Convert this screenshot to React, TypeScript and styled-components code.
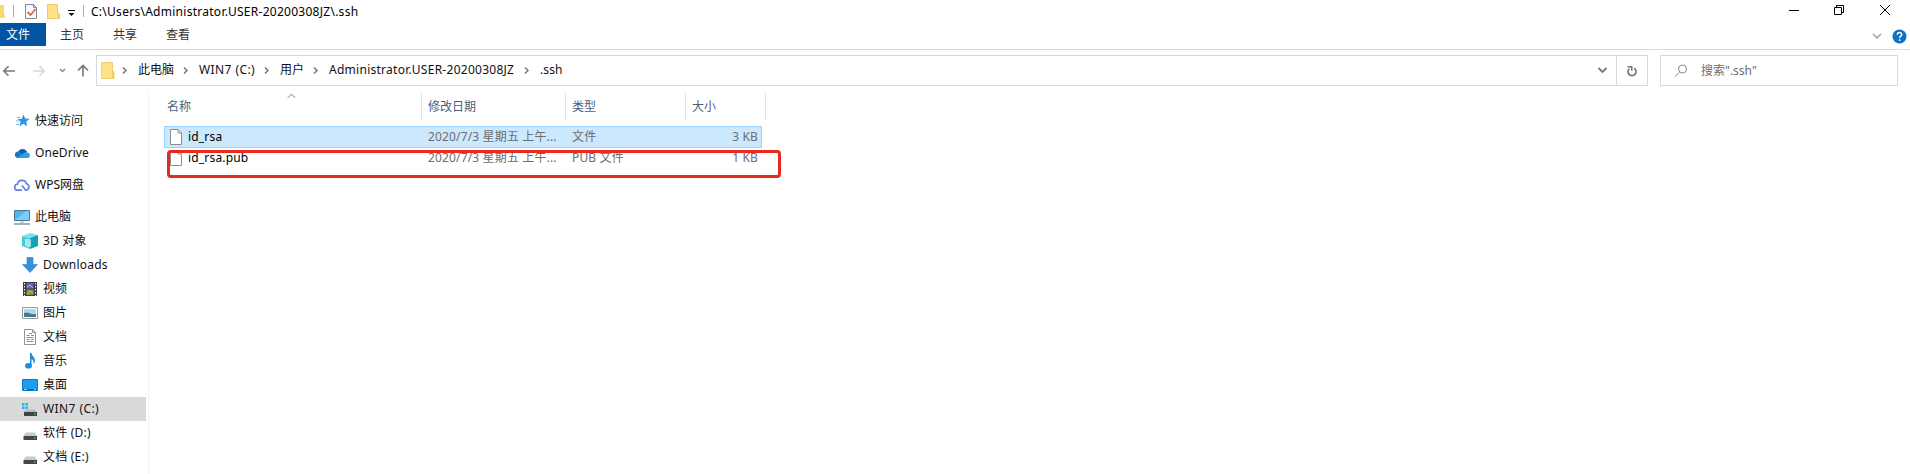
import React from 'react';
import styled, { createGlobalStyle } from 'styled-components';

const Global = createGlobalStyle`
  * { box-sizing: border-box; }
  body { margin: 0; background: #fff; overflow: hidden; }
`;

const Window = styled.div`
  width: 1910px;
  height: 474px;
  display: flex;
  flex-direction: column;
  background: #fff;
  overflow: hidden;
  color: #111;
  font: 12px/16px 'Noto Sans', 'Noto Sans CJK SC', sans-serif;
  white-space: pre;
  svg { display: block; flex: none; }
`;

const Label = styled.span<{ $ls?: number }>`
  letter-spacing: ${p => p.$ls ?? 0}px;
`;

const TitleBar = styled.header`
  height: 23px;
  display: flex;
  align-items: center;
`;
const QuickAccess = styled.div`
  width: 91px;
  height: 23px;
  flex: none;
`;
const Title = styled.div`
  flex: 1;
  color: #000;
  padding-top: 1px;
`;

const Tabs = styled.nav`
  height: 27px;
  display: flex;
  align-items: flex-start;
  border-bottom: 1px solid #dadbdc;
`;
const Tab = styled.div<{ $w: number; $active?: boolean }>`
  width: ${p => p.$w}px;
  height: 23px;
  padding-left: 6px;
  line-height: 24px;
  background: ${p => (p.$active ? '#0054a3' : 'transparent')};
  color: ${p => (p.$active ? '#fff' : '#333')};
`;
const RibbonTools = styled.div`
  margin-left: auto;
  padding-right: 3px;
  display: flex;
  align-items: center;
  gap: 10px;
  height: 26px;
`;

const AddressRow = styled.div`
  height: 41px;
  padding: 5px 12px 5px 0;
  display: flex;
`;
const NavButtons = styled.div`
  width: 96px;
`;
const AddressBox = styled.div`
  width: 1552px;
  height: 31px;
  padding-left: 4px;
  border: 1px solid #d9d9d9;
  display: flex;
  align-items: center;
`;
const Crumb = styled.div<{ $w: number; $ls: number }>`
  width: ${p => p.$w}px;
  padding-bottom: 1px;
  letter-spacing: ${p => p.$ls}px;
`;
const Chevron = styled.div<{ $first?: boolean }>`
  width: ${p => (p.$first ? 23 : 25)}px;
  padding-left: ${p => (p.$first ? 7 : 9)}px;
`;
const Dropdown = styled.div`
  margin-left: auto;
  padding-right: 8px;
`;
const Refresh = styled.div`
  width: 31px;
  height: 29px;
  border-left: 1px solid #d9d9d9;
  display: flex;
  align-items: center;
  justify-content: center;
`;
const SearchBox = styled.div`
  width: 238px;
  height: 31px;
  margin-left: 12px;
  padding-left: 13px;
  border: 1px solid #d9d9d9;
  display: flex;
  align-items: center;
  gap: 13px;
  color: #6d6d6d;
`;

const Body = styled.div`
  flex: 1;
  display: flex;
  min-height: 0;
`;
const Sidebar = styled.aside`
  width: 149px;
  padding-top: 14px;
  border-right: 1px solid #f3f3f3;
`;
const Group = styled.div<{ $last?: boolean }>`
  height: ${p => (p.$last ? 24 : 32)}px;
  margin-top: ${p => (p.$last ? 4 : 0)}px;
  padding-left: 14px;
  display: flex;
  align-items: center;
  gap: 5px;
`;
const Entry = styled.div<{ $selected?: boolean }>`
  width: 146px;
  height: 24px;
  padding-left: 22px;
  display: flex;
  align-items: center;
  gap: 5px;
  background: ${p => (p.$selected ? '#d9d9d9' : 'transparent')};
`;

const Files = styled.main`
  position: relative;
  width: 1761px;
  padding: 2px 0 0 15px;
`;
const HeaderRow = styled.div`
  height: 33px;
  display: flex;
  align-items: flex-start;
`;
const HeaderCell = styled.div<{ $w: number; $pad: number }>`
  width: ${p => p.$w}px;
  height: 27px;
  padding-left: ${p => p.$pad}px;
  line-height: 27px;
  border-right: 1px solid #e2e4e8;
  color: #4c607a;
`;
const SortMark = styled.div`
  position: absolute;
  left: 138px;
  top: 2px;
`;
const FileRow = styled.div<{ $selected?: boolean }>`
  width: 598px;
  height: 22px;
  margin-bottom: -1px;
  display: flex;
  align-items: center;
  border: 1px solid ${p => (p.$selected ? '#99d1ff' : 'transparent')};
  background: ${p => (p.$selected ? '#cce8ff' : 'transparent')};
`;
const FileName = styled.div`
  width: 263px;
  padding-left: 5px;
  display: flex;
  align-items: center;
  gap: 6px;
  color: #000;
`;
const Cell = styled.div<{ $w: number; $right?: boolean }>`
  width: ${p => p.$w}px;
  text-align: ${p => (p.$right ? 'right' : 'left')};
  letter-spacing: 0.15px;
  color: #6d6d6d;
`;
const Highlight = styled.div`
  position: absolute;
  left: 18px;
  top: 59px;
  width: 614px;
  height: 28px;
  border: 3px solid #e52b20;
  border-radius: 4px;
`;

const QuickIcons = () => (
  <svg width="91" height="23">
    <path d="M0 5h4v10h1v3H0z" fill="#fbd96f" />
    <path d="M13.500 5v12M83.500 5v12" stroke="#aaa" />
    <path d="M25.500 4.500h8l3 3v11h-11z" fill="#f7f9fc" stroke="#7d8a9b" />
    <path d="M33.500 4.500v3h3" fill="none" stroke="#7d8a9b" />
    <path d="M27.500 12l3 3 5-6" fill="none" stroke="#e0663c" strokeWidth="1.800" />
    <path d="M47.500 4.500h10v10h2v4h-12z" fill="#fde08a" stroke="#ecc962" />
    <path d="M57.500 14.500v-2h2v6h-2z" fill="#f5cf67" />
    <path d="M68 10.500h7" stroke="#111" />
    <path d="M68.500 13h6l-3 3z" fill="#111" />
  </svg>
);
const WindowControls = () => (
  <svg width="135" height="23">
    <g fill="none" stroke="#000">
      <path d="M14 10.500h10" />
      <path d="M59.500 7.500h7v7h-7zM61.500 7v-1.500h7v7H67" />
      <path d="M105 5l10 10M115 5l-10 10" />
    </g>
  </svg>
);
const NavArrows = () => (
  <svg width="96" height="31">
    <g fill="none" strokeWidth="1.600">
      <path d="M15 16H4M8.500 11.200L3.800 16l4.700 4.800" stroke="#777" />
      <path d="M33 16h11M39.500 11.200l4.700 4.800-4.700 4.800" stroke="#d8d8d8" />
      <path d="M60 14l2.500 2.500L65 14" stroke="#8a8a8a" strokeWidth="1.500" />
      <path d="M83 21.500v-11M78 15.500l5-5 5 5" stroke="#777" />
    </g>
  </svg>
);
const FolderIcon = () => (
  <svg width="14" height="17">
    <path d="M.5.500h11v9h1.500v7H.500z" fill="#fde08a" stroke="#efcf70" />
    <path d="M11 9h2v7h-2z" fill="#f3cb5e" />
  </svg>
);
const Sep = () => (
  <svg width="6" height="9">
    <path d="M1 1.500l3 3-3 3" fill="none" stroke="#777" strokeWidth="1.500" />
  </svg>
);
const PageIcon = () => (
  <svg width="12" height="16">
    <path d="M.5.500h7.500l3.500 3.500v11.500H.500z" fill="#fff" stroke="#8e8e8e" />
    <path d="M8 .500v3.500h3.500" fill="none" stroke="#8e8e8e" />
  </svg>
);

const icons: Record<string, React.ReactNode> = {
  star: (
    <>
      <path d="M9.500 1.500l1.700 4 4.500.3-3.500 3 .9 4.500-3.700-2.500-4 2.600 1.300-4.600L3.500 6l4.200-.3z" fill="#2e95e0" />
      <path d="M3 4.500h3M2 8h3M2 11.500h3" stroke="#6bb7ee" />
    </>
  ),
  cloud: (
    <>
      <path d="M4 7a5 5 0 0 1 9-.5L8 12z" fill="#0a5db0" />
      <path d="M3.500 13a3.300 3.300 0 0 1 .3-6.500c2 0 3.500 1.500 5.700 3L7 13z" fill="#1379cf" />
      <path d="M3 13l7-5c2-1.500 6-.5 6 2.500 0 1.500-1 2.500-2.500 2.500z" fill="#2d9fe9" />
    </>
  ),
  wps: (
    <path d="M8 13.200H4a3 3 0 0 1-.5-6 4.600 4.600 0 0 1 9-.4A3.300 3.300 0 0 1 12.300 13.200c-2.600 0-1.800-4.400-4.800-4.400" fill="none" stroke="#5b86e8" strokeWidth="1.700" />
  ),
  pc: (
    <>
      <path d="M.5 1.500h15v10H.500z" fill="#4fb5ee" stroke="#4c7c9b" />
      <path d="M1 11L12 2h3v9z" fill="#79cdf6" />
      <path d="M6 13h4" stroke="#aaa" />
      <path d="M0 15h16" stroke="#8b969e" strokeWidth="1.500" />
    </>
  ),
  cube: (
    <>
      <path d="M0 3l8-3 8 2-7 3z" fill="#7fe0e9" />
      <path d="M0 3l8 2v11l-8-3z" fill="#45cbd9" />
      <path d="M8 5l8-3v11l-8 3z" fill="#12a3b5" />
      <path d="M3 5.500l6 1v7l-3 1-3-2z" fill="#c7f4f6" opacity=".7" />
    </>
  ),
  down: <path d="M5 .500h6v7h4.500L8 15.500.500 7.500H5z" fill="#3a8fdd" stroke="#2f7fc6" strokeWidth=".6" />,
  video: (
    <>
      <path d="M1 1h14v14H1z" fill="#3b3f45" />
      <path d="M4.500 2h7v5.500h-7z" fill="#5e66c4" />
      <path d="M4.500 8.500h7V14h-7z" fill="#8d8d4e" />
      <path d="M5 6l3-2 3 3M5 13l3-3 3 2" stroke="#d4be45" fill="none" />
      <path d="M2.500 2v13M13.500 2v13" stroke="#eee" strokeDasharray="1.500 1.500" />
    </>
  ),
  image: (
    <>
      <path d="M.5 2.500h15v11H.500z" fill="#fff" stroke="#999" />
      <path d="M2 4h12v8H2z" fill="#a9d8f4" />
      <path d="M2 8c4-2 6 2 12 1v3H2z" fill="#437d83" />
    </>
  ),
  doc: (
    <>
      <path d="M2.500.500h8l3 3v12h-11z" fill="#fff" stroke="#8795a0" />
      <path d="M10.500.500v3h3" fill="none" stroke="#8795a0" />
      <path d="M7 4.500h3M4.500 6.500h3M9 6.500h3M4.500 8.500h7M4.500 10.500h3M9 10.500h3M4.500 12.500h7" stroke="#4aa0dc" />
    </>
  ),
  music: (
    <>
      <path d="M8 0h1.500c.5 3.500 4 4 3.500 8.500-.3 1.200-.8 2-1.500 2.500C12 8 11 7 9.500 6v6.500H8z" fill="#1b8be0" />
      <ellipse cx="6.500" cy="12.700" rx="3.500" ry="2.800" fill="#1b8be0" />
    </>
  ),
  desk: (
    <>
      <path d="M.5 2.500h15v11H.500z" fill="#1b9df2" stroke="#1478bd" />
      <path d="M1 12.500h14" stroke="#0b5f9c" />
      <path d="M2 12.500h3M12 12.500h2" stroke="#8bd0fb" />
    </>
  ),
  win: (
    <>
      <path d="M0 2h2.500v2.500H0zM3.500 2H6v2.500H3.500zM0 5.500h2.500V8H0zM3.500 5.500H6V8H3.500z" fill="#1fb6e8" />
      <path d="M4 8.500h8.500l2 2.500H2z" fill="#b9bcbe" />
      <path d="M2 11h13v4H2z" fill="#3e4244" />
      <path d="M12 13h1.500" stroke="#55e08a" />
    </>
  ),
  drive: (
    <>
      <path d="M3.500 7.500h9.500l2 3.500H1.500z" fill="#c9cbcc" />
      <path d="M1.500 11h13.500v4H1.500z" fill="#44484a" />
      <path d="M12 13h1.500" stroke="#55e08a" />
    </>
  ),
};
const Glyph = ({ name }: { name: string }) => (
  <svg width="16" height="16" viewBox="0 0 16 16">{icons[name]}</svg>
);

const groups = [
  { icon: 'star', text: '快速访问' },
  { icon: 'cloud', text: 'OneDrive', ls: 0.08 },
  { icon: 'wps', text: 'WPS网盘' },
  { icon: 'pc', text: '此电脑', last: true },
];
const entries = [
  { icon: 'cube', text: '3D 对象', ls: 0.2 },
  { icon: 'down', text: 'Downloads', ls: 0.22 },
  { icon: 'video', text: '视频' },
  { icon: 'image', text: '图片' },
  { icon: 'doc', text: '文档' },
  { icon: 'music', text: '音乐' },
  { icon: 'desk', text: '桌面' },
  { icon: 'win', text: 'WIN7 (C:)', ls: 0.42, selected: true },
  { icon: 'drive', text: '软件 (D:)', ls: 0.22 },
  { icon: 'drive', text: '文档 (E:)', ls: 0.22 },
];
const crumbs = [
  { text: '此电脑', w: 36, ls: 0 },
  { text: 'WIN7 (C:)', w: 56, ls: 0.42 },
  { text: '用户', w: 24, ls: 0 },
  { text: 'Administrator.USER-20200308JZ', w: 186, ls: 0.27 },
  { text: '.ssh', w: 40, ls: 0.1 },
];
const files = [
  { name: 'id_rsa', type: '文件', size: '3 KB', selected: true },
  { name: 'id_rsa.pub', type: 'PUB 文件', size: '1 KB' },
];

export default function App() {
  return (
    <Window>
      <Global />
      <TitleBar>
        <QuickAccess><QuickIcons /></QuickAccess>
        <Title><Label $ls={0.27}>C:\Users\Administrator.USER-20200308JZ\.ssh</Label></Title>
        <WindowControls />
      </TitleBar>
      <Tabs>
        <Tab $w={46} $active>文件</Tab>
        <Tab $w={8} />
        <Tab $w={53}>主页</Tab>
        <Tab $w={53}>共享</Tab>
        <Tab $w={53}>查看</Tab>
        <RibbonTools>
          <svg width="10" height="6"><path d="M1 1l4 4 4-4" fill="none" stroke="#999" strokeWidth="1.300" /></svg>
          <svg width="15" height="15">
            <circle cx="7.500" cy="7.500" r="7" fill="#0f6fc6" />
            <path d="M5.300 5.800c0-3 4.600-2.800 4.400-.2-.1 1.300-2.100 1.600-2.100 3.400M7.600 10.300v1.600" fill="none" stroke="#fff" strokeWidth="1.500" />
          </svg>
        </RibbonTools>
      </Tabs>
      <AddressRow>
        <NavButtons><NavArrows /></NavButtons>
        <AddressBox>
          <FolderIcon />
          {crumbs.map((c, i) => (
            <React.Fragment key={c.text}>
              <Chevron $first={i === 0}><Sep /></Chevron>
              <Crumb $w={c.w} $ls={c.ls}>{c.text}</Crumb>
            </React.Fragment>
          ))}
          <Dropdown>
            <svg width="11" height="7">
              <path d="M1.500 1l4 4 4-4" fill="none" stroke="#777" strokeWidth="1.800" />
            </svg>
          </Dropdown>
          <Refresh>
            <svg width="12" height="12">
              <path d="M3.200 3.900a4 4 0 1 0 5-.6" fill="none" stroke="#777" strokeWidth="1.700" />
              <path d="M1.500 1.700h4.300v4" fill="none" stroke="#777" strokeWidth="1.500" />
            </svg>
          </Refresh>
        </AddressBox>
        <SearchBox>
          <svg width="14" height="14">
            <circle cx="8.500" cy="5" r="4" fill="none" stroke="#888" />
            <path d="M5.700 7.900L.700 12.800" stroke="#888" />
          </svg>
          <Label>搜索".ssh"</Label>
        </SearchBox>
      </AddressRow>
      <Body>
        <Sidebar>
          {groups.map(g => (
            <Group key={g.text} $last={g.last}><Glyph name={g.icon} /><Label $ls={g.ls}>{g.text}</Label></Group>
          ))}
          {entries.map(e => (
            <Entry key={e.text} $selected={e.selected}><Glyph name={e.icon} /><Label $ls={e.ls}>{e.text}</Label></Entry>
          ))}
        </Sidebar>
        <Files>
          <SortMark>
            <svg width="9" height="6"><path d="M.800 4.800l3.700-3.700 3.700 3.700" fill="none" stroke="#777" /></svg>
          </SortMark>
          <HeaderRow>
            <HeaderCell $w={258} $pad={3}>名称</HeaderCell>
            <HeaderCell $w={144} $pad={6}>修改日期</HeaderCell>
            <HeaderCell $w={120} $pad={6}>类型</HeaderCell>
            <HeaderCell $w={80} $pad={6}>大小</HeaderCell>
          </HeaderRow>
          {files.map(f => (
            <FileRow key={f.name} $selected={f.selected}>
              <FileName><PageIcon /><Label $ls={0.18}>{f.name}</Label></FileName>
              <Cell $w={144}>2020/7/3 星期五 上午...</Cell>
              <Cell $w={105}>{f.type}</Cell>
              <Cell $w={81} $right>{f.size}</Cell>
            </FileRow>
          ))}
          <Highlight />
        </Files>
      </Body>
    </Window>
  );
}
